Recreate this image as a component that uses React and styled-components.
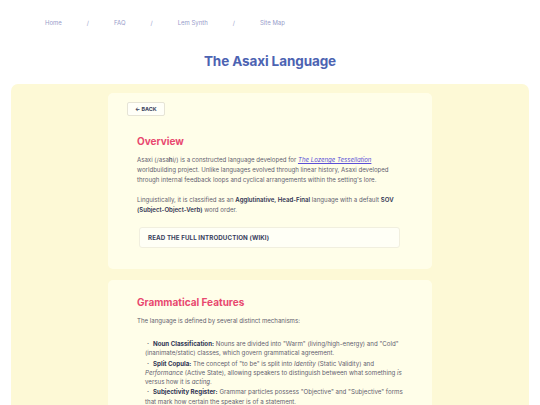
import styled, { createGlobalStyle } from "styled-components";

const GlobalStyle = createGlobalStyle`
  * { box-sizing: border-box; }
  body {
    margin: 0;
    background: #ffffff;
    font-family: Inter, "Noto Sans", sans-serif;
    overflow: hidden;
  }
`;

const Page = styled.div`
  width: 540px;
  height: 405px;
  overflow: hidden;
`;

const Crumbs = styled.nav`
  display: flex;
  align-items: center;
  gap: 25px;
  padding: 17px 0 0 45px;
  height: 28px;
  font-size: 6px;
  color: #989dca;
`;

const Title = styled.h1`
  margin: 0;
  padding-top: 25px;
  height: 56px;
  line-height: 16px;
  text-align: center;
  font-size: 13.5px;
  font-weight: 700;
  letter-spacing: -0.1px;
  color: #4c63b2;
`;

const Panel = styled.main`
  margin: 0 11px;
  padding: 9px 0;
  background: #fdf9d6;
  border-radius: 7px;
  min-height: 330px;
  display: flex;
  flex-direction: column;
  align-items: center;
  gap: 11px;
`;

const Card = styled.section`
  width: 324px;
  background: #fffee9;
  border-radius: 5px;
  padding: ${(p) => p.$pad || "9px 29px 21px 29px"};
`;

const BackButton = styled.button`
  display: flex;
  align-items: center;
  gap: 3px;
  margin-left: -10px;
  width: fit-content;
  height: 14px;
  padding: 0 7px;
  border: 1px solid #e6e4d6;
  border-radius: 2px;
  background: #fffff8;
  font-family: inherit;
  font-size: 5.4px;
  font-weight: 700;
  color: #3a3f5c;
`;

const Heading = styled.h2`
  margin: ${(p) => p.$m || "19px 0 8px 0"};
  font-size: 10px;
  line-height: 12px;
  font-weight: 700;
  color: #e8486f;
`;

const Para = styled.p`
  margin: 0 0 10px 0;
  font-size: 6.1px;
  line-height: 10px;
  color: #5f606f;
`;

const Strong = styled.b`
  font-weight: 600;
  color: #2f3352;
`;

const Term = styled(Strong)`
  font-weight: 700;
`;

const Link = styled.a`
  color: #5b4fd6;
  font-style: italic;
  text-decoration: underline;
`;

const WikiBox = styled.div`
  margin: 12px 3px 0 2px;
  height: 21px;
  display: flex;
  align-items: center;
  padding-left: 8px;
  border: 1px solid #f1efdf;
  border-radius: 3px;
  background: #fffff6;
  font-size: 6.2px;
  font-weight: 700;
  letter-spacing: 0.1px;
  color: #393e5d;
`;

const List = styled.ul`
  margin: 13px 0 0 0;
  padding: 0 0 0 8px;
  list-style: none;
`;

const Item = styled.li`
  font-size: 6.17px;
  line-height: 9.3px;
  color: #5f606f;
  margin-bottom: 1px;
  &::before {
    content: "·";
    margin: 0 4px 0 2px;
    font-weight: 700;
  }
`;

export default function App() {
  return (
    <Page>
      <GlobalStyle />
      <Crumbs>
        <span>Home</span>
        <span>/</span>
        <span>FAQ</span>
        <span>/</span>
        <span>Lem Synth</span>
        <span>/</span>
        <span>Site Map</span>
      </Crumbs>
      <Title>The Asaxi Language</Title>
      <Panel>
        <Card>
          <BackButton>← BACK</BackButton>
          <Heading>Overview</Heading>
          <Para>
            Asaxi (/asa<b>h</b>i/) is a constructed language developed for{" "}
            <Link>The Lozenge Tessellation</Link> worldbuilding project. Unlike
            languages evolved through linear history, Asaxi developed through
            internal feedback loops and cyclical arrangements within the
            setting's lore.
          </Para>
          <Para>
            Linguistically, it is classified as an{" "}
            <Strong>Agglutinative, Head-Final</Strong> language with a default{" "}
            <Strong>SOV (Subject-Object-Verb)</Strong> word order.
          </Para>
          <WikiBox>READ THE FULL INTRODUCTION (WIKI)</WikiBox>
        </Card>
        <Card $pad="0 29px 20px 29px">
          <Heading $m="16px 0 8px 0">Grammatical Features</Heading>
          <Para>The language is defined by several distinct mechanisms:</Para>
          <List>
            <Item>
              <Term>Noun Classification:</Term> Nouns are divided into
              "Warm" (living/high-energy) and "Cold" (inanimate/static)
              classes, which govern grammatical agreement.
            </Item>
            <Item>
              <Term>Split Copula:</Term> The concept of "to be" is split
              into <i>Identity</i> (Static Validity) and <i>Performance</i>{" "}
              (Active State), allowing speakers to distinguish between what
              something <i>is</i> versus how it is <i>acting</i>.
            </Item>
            <Item>
              <Term>Subjectivity Register:</Term> Grammar particles possess
              "Objective" and "Subjective" forms that mark how certain the
              speaker is of a statement.
            </Item>
          </List>
        </Card>
      </Panel>
    </Page>
  );
}
